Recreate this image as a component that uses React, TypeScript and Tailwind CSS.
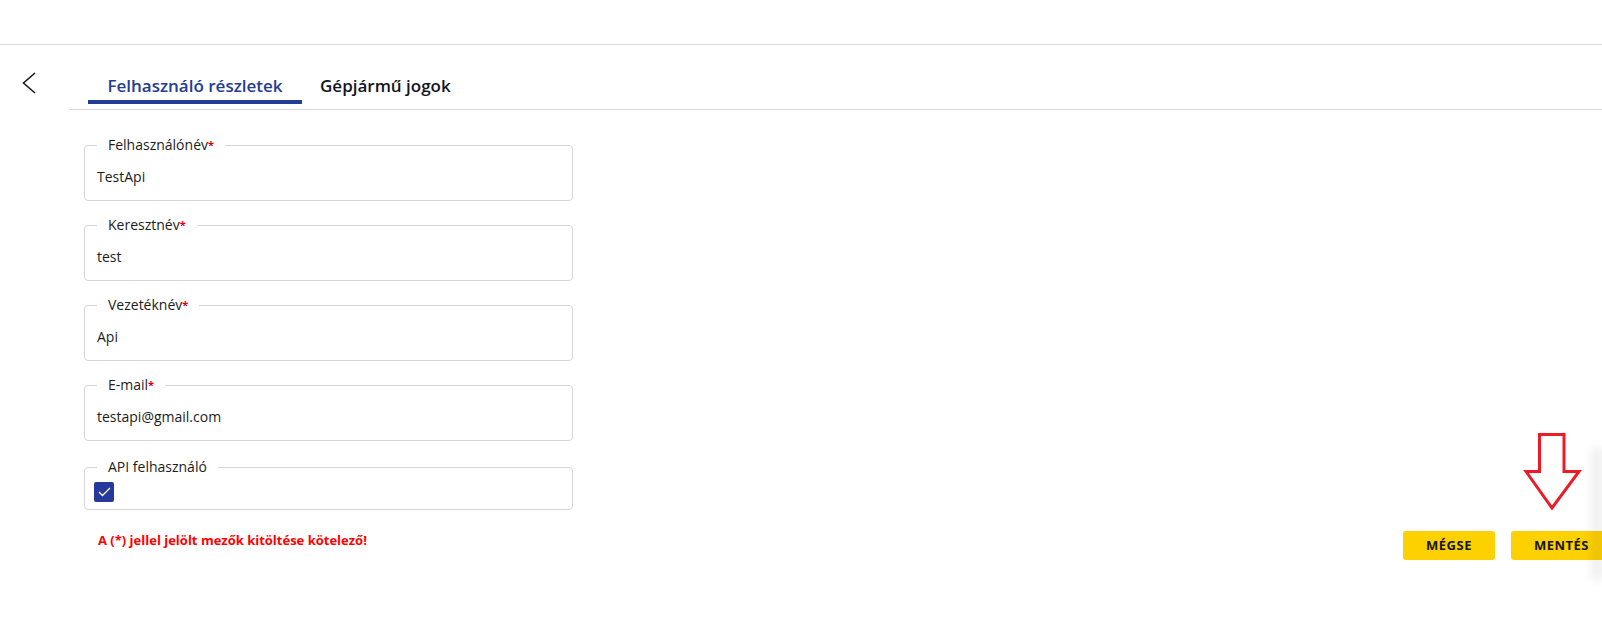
import React from "react";

const font = { fontFamily: '"Open Sans", "Noto Sans", Arial, sans-serif' };

function Field({ label, value, required = true }: { label: string; value: string; required?: boolean }) {
  return (
    <fieldset className="border border-[#d6d6d6] rounded-[4px] px-3 m-0 min-w-0">
      <legend className="px-[11px] text-[14px] leading-4 text-[#1c1c1c]">
        {label}
        {required && <span className="text-[11px] font-bold align-top text-[#e3001b]">*</span>}
      </legend>
      <div className="pt-[14px] pb-[13px] text-[14px] leading-5 text-[#1c1c1c]">{value}</div>
    </fieldset>
  );
}

export default function App() {
  return (
    <div style={font} className="relative w-full h-[629px] bg-white overflow-hidden">
      <div className="h-[44px]" />
      <div className="border-t border-[#dadada]" />
      <div className="flex">
        <div className="w-[69px] shrink-0 pt-[27px] pl-[22px]">
          <svg width="15" height="22" viewBox="0 0 15 22" fill="none">
            <polyline points="13,1 1.5,11 13,21" stroke="#1a1a1a" strokeWidth="1.6" strokeLinejoin="miter" />
          </svg>
        </div>
        <div className="flex-1 min-w-0">
          <div className="flex border-b border-[#d9d9d9] h-[65px] pl-[19px]">
            <div className="flex flex-col w-[214px]">
              <div className="flex-1 flex items-center justify-center pt-[27px] text-[17px] font-semibold text-[#233c94]">
                Felhasználó részletek
              </div>
              <div className="h-[4px] bg-[#233c94] mb-[5px]" />
            </div>
            <div className="flex flex-col">
              <div className="flex-1 flex items-center px-[18px] pt-[27px] text-[17px] font-semibold text-[#111522]">
                Gépjármű jogok
              </div>
              <div className="h-[4px] mb-[5px]" />
            </div>
          </div>
          <div className="flex items-end pl-[15px] pt-[27px]">
            <div className="w-[489px] shrink-0 flex flex-col gap-4 pb-[12px]">
              <Field label="Felhasználónév" value="TestApi" />
              <Field label="Keresztnév" value="test" />
              <Field label="Vezetéknév" value="Api" />
              <Field label="E-mail" value="testapi@gmail.com" />
              <fieldset className="border border-[#d6d6d6] rounded-[4px] px-[9px] m-0 min-w-0 mt-[2px]">
                <legend className="ml-[3px] px-[11px] text-[14px] leading-4 text-[#1c1c1c]">API felhasználó</legend>
                <div className="pt-[7px] pb-[7px]">
                  <div className="w-5 h-5 rounded-[2px] bg-[#25399a] flex items-center justify-center">
                    <svg width="13" height="10" viewBox="0 0 13 10" fill="none">
                      <polyline points="1,5 4.5,8.5 12,1" stroke="white" strokeWidth="1.3" />
                    </svg>
                  </div>
                </div>
              </fieldset>
              <div className="mt-[6px] pl-[14px] text-[13px] leading-4 font-bold text-[#ff0000]">
                A (*) jellel jelölt mezők kitöltése kötelező!
              </div>
            </div>
            <div className="ml-auto flex gap-4 -mr-[10px] shrink-0">
              <button className="w-[92px] h-[29px] rounded-[3px] bg-[#fdd000] text-[13px] font-bold text-[#151515] tracking-[0.5px]">
                MÉGSE
              </button>
              <button className="w-[101px] h-[29px] rounded-[3px] bg-[#fdd000] text-[13px] font-bold text-[#151515] tracking-[0.5px]">
                MENTÉS
              </button>
            </div>
          </div>
        </div>
      </div>
      <svg className="absolute left-[1522px] top-[430px]" width="62" height="84" viewBox="0 0 62 84" fill="none">
        <polygon points="17.5,4.5 42,4.5 42,41.5 57,41.5 30,78 4,41.5 17.5,41.5" stroke="#ed1c24" strokeWidth="3" strokeLinejoin="miter" fill="white" />
      </svg>
      <div className="absolute right-0 top-[448px] h-[132px] w-[14px] bg-gradient-to-r from-transparent to-black/10 blur-[4px]" />
    </div>
  );
}
